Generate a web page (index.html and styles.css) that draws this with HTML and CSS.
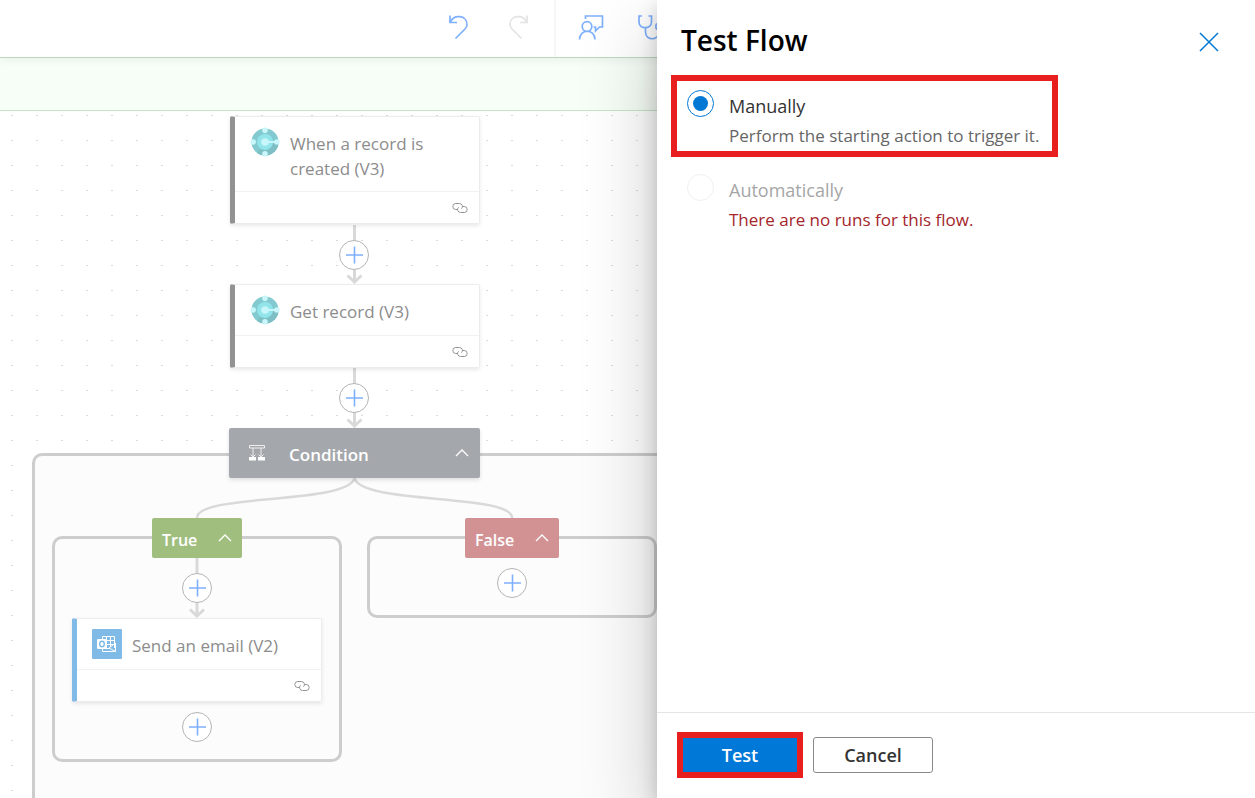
FILE: index.html
```html
<!DOCTYPE html>
<html lang="en">
<head>
<meta charset="utf-8">
<meta name="viewport" content="width=device-width, initial-scale=1">
<title>Test Flow</title>
<link rel="stylesheet" href="styles.css">
</head>
<body>
<svg class="defs" aria-hidden="true">
  <symbol id="dataverse" viewBox="0 0 30 30">
    <circle cx="15" cy="15" r="13.5" fill="#82cacf"/>
    <path d="M15 15 L28.5 15 A13.5 13.5 0 0 1 7 26 Z" fill="#7dbfc4"/>
    <circle cx="15" cy="15" r="8" fill="#92e4eb"/>
    <path d="M15 15H27" stroke="#c8f6fa" stroke-width="2"/>
    <g fill="#c8f6fa"><circle cx="15" cy="3.2" r="2.8"/><circle cx="15" cy="26.8" r="2.8"/><circle cx="3.2" cy="15" r="2.8"/><circle cx="26.8" cy="15" r="2.8"/><circle cx="15" cy="15" r="3.8"/></g>
  </symbol>
  <symbol id="link" viewBox="0 0 16 12">
    <path d="M5.5 7.500H3.800A3 3 0 0 1 3.800 1.500H7.500A3 3 0 0 1 9.500 6.700M10.500 4.500H12.200A3 3 0 0 1 12.200 10.500H8.500A3 3 0 0 1 6.500 5.300" fill="none" stroke="#949494"/>
  </symbol>
  <symbol id="plus" viewBox="0 0 28 28">
    <path d="M14.500 5.500V22.500M6 14H23" stroke="#7fb0fb" stroke-width="1.600"/>
  </symbol>
  <symbol id="chevron" viewBox="0 0 14 8">
    <path d="M1 7L7 1L13 7" fill="none" stroke="#fff" stroke-width="1.3"/>
  </symbol>
</svg>
<div class="app">
  <main class="workspace">
    <header class="toolbar">
      <button class="tool" aria-label="Undo"><svg width="28" height="28" viewBox="0 0 28 28"><path d="M5 2.500V9.500H12M5.500 9C9 1 22 2 22 11.500C22 13.500 21.300 14.800 20 16L10.500 25.500" stroke="#7fb0fb"/></svg></button>
      <button class="tool" aria-label="Redo" disabled><svg width="28" height="28" viewBox="0 0 28 28"><path d="M22 2.500V9.500H15M21.500 9C18 1 5 2 5 11.500C5 13.500 5.700 14.800 7 16L16.500 25.500" stroke="#e3e3e3"/></svg></button>
      <span class="divider"></span>
      <button class="tool" aria-label="Feedback"><svg width="28" height="28" viewBox="0 0 28 28"><path d="M8.500 6V3H25.500V14H22.500L18.500 18V14H16.500M2.500 26.500C2.500 15.500 18 15.500 18 26.500M14.800 13.500A4.800 4.800 0 1 1 5.200 13.500A4.800 4.800 0 1 1 14.800 13.500" stroke="#7fb0fb"/></svg></button>
      <button class="tool" aria-label="Flow checker"><svg width="28" height="28" viewBox="0 0 28 28"><path d="M5 3H2V9C2 16.500 14.500 16.500 14.500 9V3H11.500M8.500 14.500V19C8.500 28 22 28 22 19V17" stroke="#7fb0fb"/><circle cx="22" cy="13.500" r="3.200" stroke="#7fb0fb"/></svg></button>
    </header>
    <div class="banner"></div>
    <section class="canvas" aria-label="Flow designer">
      <svg class="grid" aria-hidden="true"><defs><pattern id="dots" width="25" height="25" patternUnits="userSpaceOnUse"><rect x="11" y="4" width="2" height="1" fill="#dadada"/></pattern></defs><rect width="100%" height="100%" fill="url(#dots)"/></svg>
      <div class="scope scope-condition"></div>
      <div class="scope scope-true"></div>
      <div class="scope scope-false"></div>
      <svg class="wires" aria-hidden="true">
        <path d="M354.500 114V171M347.500 164.500L354.500 171L361.500 164.500M354.500 257V315M347.500 308.500L354.500 315L361.500 308.500M197 447V505M190 498.500L197 505L204 498.500"/>
        <path class="curve" d="M354.500 367C348 394 197 382 197 407M354.500 367C361 394 512 382 512 407"/>
      </svg>

      <article class="card card-trigger">
        <div class="card-head"><svg class="card-icon" width="30" height="30"><use href="#dataverse"/></svg><h2>When a record is created (V3)</h2></div>
        <div class="card-foot"><svg width="16" height="12"><use href="#link"/></svg></div>
      </article>
      <button class="add add-1" aria-label="Insert step"><svg width="28" height="28"><use href="#plus"/></svg></button>

      <article class="card card-get">
        <div class="card-head"><svg class="card-icon" width="30" height="30"><use href="#dataverse"/></svg><h2>Get record (V3)</h2></div>
        <div class="card-foot"><svg width="16" height="12"><use href="#link"/></svg></div>
      </article>
      <button class="add add-2" aria-label="Insert step"><svg width="28" height="28"><use href="#plus"/></svg></button>

      <button class="condition">
        <svg width="18" height="18" viewBox="0 0 18 18"><path d="M1.500 1.500H16.500V4H1.500ZM5 4V12M13 4V12M2.500 10.500L5 13L7.500 10.500M10.500 10.500L13 13L15.500 10.500" fill="none" stroke="#fff" stroke-opacity=".8"/><path d="M1 13H8V16.500H1ZM10 13H17V16.500H10Z" fill="#fff"/></svg>
        <span>Condition</span>
        <svg width="14" height="8"><use href="#chevron"/></svg>
      </button>
      <button class="branch branch-true"><span>True</span><svg width="14" height="8"><use href="#chevron"/></svg></button>
      <button class="branch branch-false"><span>False</span><svg width="14" height="8"><use href="#chevron"/></svg></button>
      <button class="add add-3" aria-label="Insert step"><svg width="28" height="28"><use href="#plus"/></svg></button>
      <button class="add add-4" aria-label="Insert step"><svg width="28" height="28"><use href="#plus"/></svg></button>

      <article class="card card-mail">
        <div class="card-head"><svg class="card-icon" width="30" height="30" viewBox="0 0 30 30"><rect width="30" height="30" rx="1" fill="#80bbe8"/><path d="M10.500 10V7.500H22.500V19M10.500 11.500H22.500M14.500 7.500V18M18.500 7.500V18M14 15.500H22.500M10.500 20V22.500H23.500V14L17 19L23.500 22.500M13 19.500H18" fill="none" stroke="#fff"/><rect x="5" y="10" width="10" height="10" rx="1" fill="#fff"/><ellipse cx="10" cy="15" rx="2.300" ry="2.700" fill="none" stroke="#80bbe8" stroke-width="1.400"/></svg><h2>Send an email (V2)</h2></div>
        <div class="card-foot"><svg width="16" height="12"><use href="#link"/></svg></div>
      </article>
      <button class="add add-5" aria-label="Insert step"><svg width="28" height="28"><use href="#plus"/></svg></button>
    </section>
  </main>

  <aside class="panel" aria-labelledby="panel-title">
    <header class="panel-head">
      <h1 id="panel-title">Test Flow</h1>
      <button class="close" aria-label="Close"><svg width="20" height="20" viewBox="0 0 20 20"><path d="M1 1L19 19M19 1L1 19" stroke="#0078d4" stroke-width="1.500"/></svg></button>
    </header>
    <form class="options">
      <div class="option option-marked">
        <input type="radio" name="mode" id="manual" checked aria-describedby="manual-note">
        <div>
          <label for="manual">Manually</label>
          <p id="manual-note">Perform the starting action to trigger it.</p>
        </div>
      </div>
      <div class="option option-off">
        <input type="radio" name="mode" id="auto" disabled aria-describedby="auto-note">
        <div>
          <label for="auto">Automatically</label>
          <p id="auto-note">There are no runs for this flow.</p>
        </div>
      </div>
    </form>
    <footer class="panel-foot">
      <button class="primary">Test</button>
      <button class="secondary">Cancel</button>
    </footer>
  </aside>
</div>
</body>
</html>
```
FILE: styles.css
```css
* { box-sizing: border-box; }
body {
  margin: 0;
  font-family: "Open Sans", "Noto Sans", sans-serif;
  background: #fff;
}
h1, h2, p { margin: 0; }
button { font: inherit; padding: 0; border: 0; background: none; }
svg { display: block; flex: none; }
.defs { position: absolute; width: 0; height: 0; }

.app { display: flex; height: 100vh; overflow: hidden; }
.workspace { flex: 1; min-width: 0; display: flex; flex-direction: column; overflow: hidden; }

.toolbar {
  display: flex;
  justify-content: flex-end;
  flex: none;
  height: 58px;
  padding-bottom: 3px;
  margin-right: -24px;
  border-bottom: 1px solid #bcd9be;
  box-shadow: 0 2px 8px rgba(0, 0, 0, .06);
  position: relative;
}
.tool { width: 60px; display: grid; place-items: center; }
.tool svg { fill: none; stroke-width: 1.7; }
.divider { width: 2px; margin: 0 5px; height: 57px; background: #f6f6f6; }
.banner { flex: none; height: 53px; background: #f7fdf7; border-bottom: 1px solid #c5e6c7; }

.canvas { flex: 1; position: relative; overflow: hidden; }
.grid, .wires { position: absolute; inset: 0; width: 100%; height: 100%; }
.wires { fill: none; stroke: #d9d9d9; stroke-width: 3; }
.curve { stroke-width: 2.5; }

.scope { position: absolute; background: #fcfcfc; border: 3px solid #cdcdcd; border-radius: 10px; }
.scope-condition { left: 32px; top: 342px; width: 646px; height: 400px; }
.scope-true { left: 52px; top: 425px; width: 290px; height: 226px; }
.scope-false { left: 367px; top: 425px; width: 290px; height: 82px; }

.card {
  position: absolute;
  width: 250px;
  background: #fff;
  border: 1px solid #ececec;
  border-left: 5px solid #929292;
  border-radius: 2px;
  box-shadow: 0 2px 4px rgba(0, 0, 0, .09);
}
.card-trigger { left: 230px; top: 5px; }
.card-get { left: 230px; top: 173px; }
.card-mail { left: 72px; top: 507px; border-left-color: #80bbe8; }
.card-head { display: flex; gap: 10px; min-height: 50px; padding: 10px 30px 10px 15px; }
.card-head h2 { font-size: 17px; line-height: 25px; font-weight: 500; color: #8c8c8c; padding-top: 4px; }
.card-foot { display: flex; justify-content: flex-end; align-items: center; height: 32px; padding-right: 11px; border-top: 1px solid #f1f1f1; }

.add {
  position: absolute;
  width: 30px;
  height: 30px;
  border: 1px solid #b4b4b4;
  border-radius: 50%;
  background: #fff;
  display: grid;
  place-items: center;
}
.add-1 { left: 339px; top: 129px; }
.add-2 { left: 339px; top: 272px; }
.add-3 { left: 182px; top: 462px; }
.add-4 { left: 497px; top: 457px; }
.add-5 { left: 182px; top: 601px; }

.condition {
  position: absolute;
  left: 229px;
  top: 317px;
  width: 251px;
  height: 50px;
  display: flex;
  align-items: center;
  gap: 23px;
  padding: 0 11px 0 19px;
  border-radius: 2px;
  background: #a4a7ab;
  color: #fff;
  font-size: 17px;
  font-weight: 600;
  text-align: left;
  box-shadow: 0 2px 4px rgba(0, 0, 0, .12);
}
.condition span { flex: 1; padding-top: 2px; }
.branch {
  position: absolute;
  top: 407px;
  height: 40px;
  display: flex;
  align-items: center;
  justify-content: space-between;
  padding: 0 10px;
  border-radius: 2px;
  color: #fff;
  font-size: 16px;
  font-weight: 600;
}
.branch span { padding-top: 4px; }
.branch-true { left: 152px; width: 90px; background: #a0bf7f; }
.branch-false { left: 465px; width: 94px; background: #d29294; }

.panel {
  position: relative;
  flex: none;
  width: 598px;
  display: flex;
  flex-direction: column;
  background: #fff;
  box-shadow: 0 32px 72px rgba(0, 0, 0, .22), 0 6px 18px rgba(0, 0, 0, .18);
}
.panel-head { display: flex; justify-content: space-between; align-items: center; height: 75px; padding: 8px 36px 0 24px; }
.panel-head h1 { font-size: 28px; line-height: 36px; font-weight: 600; color: #000; padding-bottom: 4px; }
.close { display: grid; place-items: center; }

.options { flex: 1; display: flex; flex-direction: column; align-items: flex-start; gap: 2px; padding-left: 14px; }
.option { display: flex; gap: 15px; padding: 9px 13px 1px 10px; border: 6px solid transparent; }
.option-marked { border-color: #e81f1f; }
.option input {
  appearance: none;
  flex: none;
  width: 27px;
  height: 27px;
  margin: 0;
  border: 1px solid #0078d4;
  border-radius: 50%;
  display: grid;
  place-items: center;
}
.option input:checked::before { content: ""; width: 15px; height: 15px; border-radius: 50%; background: #0078d4; }
.option input:disabled { border-color: #f0f0f0; }
.option label { display: block; padding-top: 1px; font-size: 18px; line-height: 30px; color: #333; }
.option p { font-size: 17px; line-height: 29px; color: #666; }
.option-off label { color: #a6a6a6; }
.option-off p { color: #a4262c; }

.panel-foot { display: flex; align-items: center; gap: 10px; height: 86px; padding: 0 20px 2px; border-top: 1px solid #e6e6e6; }
.panel-foot button { font-size: 18px; font-weight: 600; }
.primary { width: 126px; height: 46px; border: 6px solid #e81f1f; background: #0078d7; color: #fff; }
.secondary { width: 120px; height: 36px; border: 1px solid #8a8886; border-radius: 3px; background: #fff; color: #333; }
```
